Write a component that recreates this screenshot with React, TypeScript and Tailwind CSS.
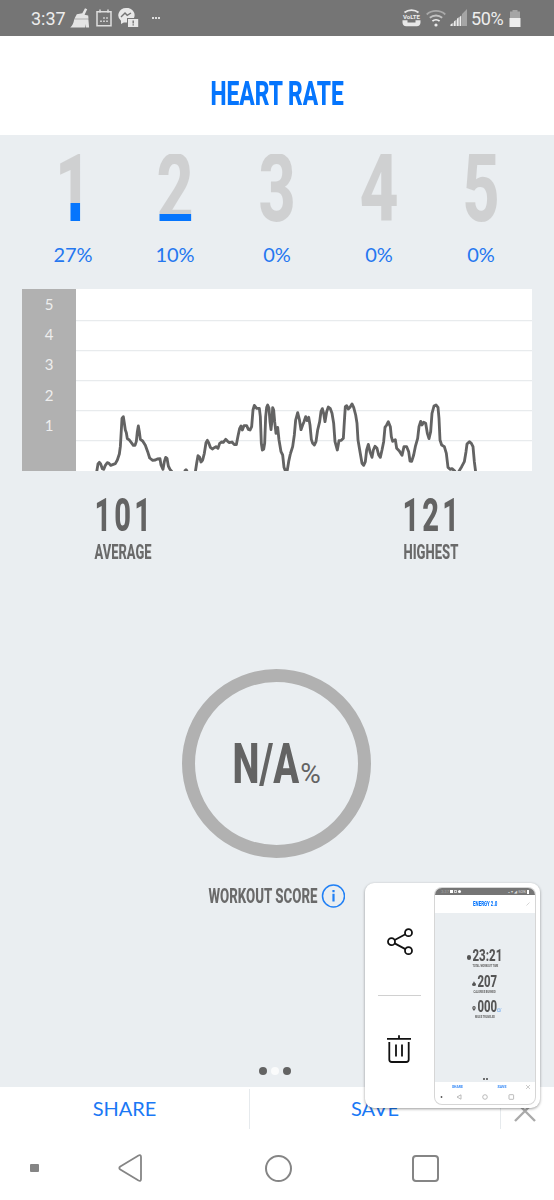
import { useLayoutEffect, useRef, useState } from "react";

const ZONES = [
  { zone: 1, percent: 27, width: 36 },
  { zone: 2, percent: 10, width: 37 },
  { zone: 3, percent: 0, width: 37 },
  { zone: 4, percent: 0, width: 39 },
  { zone: 5, percent: 0, width: 37 },
];

const TRACE_START = [
  "80,276 84,252 88,247 92,252 97,266 101,268 106,256 112,248 117,250 122,256 130,253 136,251 142,240 148,222 151,200 154,150 156,115 160,110 163,130 166,150 169,158 172,176 178,180 184,188 190,196 195,196 199,184 202,155 205,138 208,155 211,178 218,183 226,196 233,215 239,234 248,241 256,240 262,237 270,236 273,255 279,268 283,245 287,232 291,235 295,258 300,268 306,275",
  "343,274 348,269 352,274",
  "376,276 380,250 384,227 389,232 393,246 398,240 403,220 408,188 412,181 416,188 421,202 427,207 433,203 438,200 444,205 449,190 455,186 460,187 467,178 473,184 478,188 486,186 493,194 499,194 504,168 509,145 513,138 517,150 522,137 530,137 535,148 540,150 545,140 549,90 553,76 560,85 568,85 571,110 574,190 577,210 581,208 584,190 587,110 590,82 593,75 597,85 600,125 603,149 606,120 608,83 611,90 614,125 618,160 623,142 627,180 633,215 638,225 642,262 645,270 652,270 656,245 661,222",
];

const TRACE_END = [
  "61,222 68,200 73,165 77,120 83,98 88,118 93,149 98,135 102,125 107,110 111,122 116,112 120,135 124,178 128,190 133,195 138,185 143,150 149,125 153,95 157,86 161,100 165,125 170,95 175,81 181,86 186,100 191,130 195,185 202,210 207,182 214,181 220,175 224,110 226,80 230,77 235,87 240,82 246,72 251,82 257,105 261,130 264,180 270,215 276,250 281,256 286,245 290,210 295,193 300,215 306,232 310,210 315,199 321,205 326,225 331,232 336,210 341,185 345,142 350,135 355,125 361,140 364,170 368,184 376,179 380,205 388,213 396,226 402,200 410,200 416,215 420,243 425,244 431,225 436,200 443,175 447,140 452,124 456,135 461,127 467,130 472,160 477,176 482,155 486,100 492,78 498,75 504,82 507,115 510,180 515,195 523,200 529,220 534,262 541,268 546,266 556,275",
  "566,275 575,260 583,245 588,215 591,192 598,185 604,190 609,200 613,245 617,276",
];

// Squeezes a line of text to a given width, for the condensed headings.
function Condensed({
  text,
  width,
  className = "",
  fill,
}: {
  text: string;
  width: number;
  className?: string;
  fill?: number;
}) {
  const ref = useRef<HTMLSpanElement>(null);
  const [scale, setScale] = useState(1);

  useLayoutEffect(() => {
    if (ref.current) setScale(width / ref.current.offsetWidth);
  }, [text, width]);

  // the digit's baseline sits 3px above the bottom of its box
  const stop = fill ? `${3 + fill * 0.67}px` : "0px";

  return (
    <span className="flex shrink-0 justify-center" style={{ width }}>
      <span
        ref={ref}
        className={`block shrink-0 whitespace-nowrap font-[Roboto,sans-serif] font-extrabold ${className}`}
        style={{
          transform: `scaleX(${scale})`,
          ...(fill !== undefined && {
            backgroundImage: `linear-gradient(to top, #0575fd ${stop}, #cfd0d1 ${stop})`,
          }),
        }}
      >
        {text}
      </span>
    </span>
  );
}

function StatusBar() {
  return (
    <div className="flex h-9 items-center bg-[#757575] pl-[31px] pr-[32px] font-[Roboto,sans-serif] text-[18px] text-[#ededed]">
      <span className="w-[35px]">3:37</span>
      <svg className="ml-1 h-5 w-5" viewBox="0 0 20 20" fill="#e4e4e4">
        <path d="M15 .2 17.200 1.200 14.600 6.800 18.200 7.500 18.500 10.700H4.400L6.800 6.300 12.300 5.300z" />
        <path d="M4.200 11.200h14.200l.7 8.300h-3.300l-.8-3.500v3.500H.3c2-1.800 3.300-4.400 3.900-8.300z" />
      </svg>
      <svg className="ml-[6px] h-[18px] w-[16px]" viewBox="0 0 16 18" fill="none" stroke="#dedede" strokeWidth="1.500">
        <path d="M1 2.700h14v14H1zM4 .4v3.300M12 .4v3.300" />
        <path d="M7.200 9h1.600M10.200 9h1.600M4.200 12.300h1.600M7.200 12.300h1.600M10.200 12.300h1.600" strokeWidth="1.600" />
      </svg>
      <svg className="ml-[6px] h-5 w-[21px]" viewBox="0 0 21 20">
        <path d="M8 0a7.800 7.300 0 0 0-5 12.800V16l2.800-1.600H9V10h7A7.500 7.300 0 0 0 8 0z" fill="#e8e8e8" />
        <path d="m3 9 4-4 2.200 2.300L13 5" fill="none" stroke="#757575" strokeWidth="1.400" />
        <path d="M10 11h10.200v8H10z" fill="#e8e8e8" />
        <path d="M15.200 12.500v3M15.200 16.300v1.200" stroke="#757575" strokeWidth="1.400" />
      </svg>
      <span className="ml-[13px] flex gap-[1.500px]">
        <i className="size-[1.500px] bg-[#dedede]" />
        <i className="size-[1.500px] bg-[#dedede]" />
        <i className="size-[1.500px] bg-[#dedede]" />
      </span>
      <div className="ml-auto flex items-center">
        <svg className="h-[18px] w-[19px]" viewBox="0 0 19 18">
          <path d="M2.500 3.500C6.500.2 12.500.2 16.500 3.500" fill="none" stroke="#e8e8e8" strokeWidth="1.700" />
          <text x="9.500" y="9.600" textAnchor="middle" textLength="17" lengthAdjust="spacingAndGlyphs" fill="#ededed" className="font-[Roboto,sans-serif] text-[6px] font-bold">
            VoLTE
          </text>
          <path d="M.5 11.300h5v2.200h8v-2.200h5v2.200c0 2.300-1.500 3.700-3.700 3.700H4.200C2 17.200.5 15.800.5 13.500z" fill="#e8e8e8" />
        </svg>
        <svg className="ml-[5px] h-[18px] w-5" viewBox="0 0 20 18" fill="none" strokeWidth="1.800">
          <path d="M.7 5.500a14 14 0 0 1 18.600 0" stroke="#a9a9a9" />
          <path d="M3.800 8.800a9.500 9.500 0 0 1 12.400 0" stroke="#c2c2c2" />
          <path d="M6.400 12.200a5.400 5.400 0 0 1 7.200 0" stroke="#ededed" />
          <circle cx="10" cy="16" r="1.600" fill="#ededed" />
        </svg>
        <svg className="ml-[4px] h-[18px] w-[17px]" viewBox="0 0 17 18">
          <path d="M0 17 11 6.500V17zM12 5l5-5v17h-5z" fill="#a5a5a5" />
          <path d="M.5 17v-1.500L2.500 14v3zM4 17v-4.500l1.500-1.500v6zM7 17V9.800l1.500-1.500V17zM9.800 17V8l1.500-1.500V17z" fill="#ededed" />
        </svg>
        <span className="ml-[4px] w-[34px] tracking-[-0.4px]">50%</span>
        <svg className="ml-[4px] mr-[1px] h-[17px] w-[12px]" viewBox="0 0 12 17">
          <path d="M3.500 0h5v1.500H11V8H1V1.500h2.500z" fill="#a5a5a5" />
          <path d="M.5 8h11v9H.5z" fill="#ededed" />
        </svg>
      </div>
    </div>
  );
}

function HeartRateChart() {
  return (
    <div className="mx-[22px] flex h-[182px] bg-white">
      <div className="flex w-[54px] flex-col bg-[#b1b1b1] pt-[1px] text-center text-[15px] text-[#eeeeee]">
        {[5, 4, 3, 2, 1].map((n) => (
          <span key={n} className="h-[30.2px] leading-[29px]">
            {n}
          </span>
        ))}
      </div>
      <svg className="h-[182px] w-[456px]" viewBox="0 0 1368 546" fill="none">
        {[95, 185, 275, 365, 455].map((y) => (
          <path key={y} d={`M0 ${y}H1368`} stroke="#e8ebed" strokeWidth="4" />
        ))}
        <g transform="translate(-18 273)" stroke="#636363" strokeWidth="8.500" strokeLinejoin="round">
          {TRACE_START.map((points) => (
            <polyline key={points} points={points} />
          ))}
        </g>
        <g transform="translate(582 273)" stroke="#636363" strokeWidth="8.500" strokeLinejoin="round">
          {TRACE_END.map((points) => (
            <polyline key={points} points={points} />
          ))}
        </g>
      </svg>
    </div>
  );
}

function Stat({ value, label, labelWidth }: { value: string; label: string; labelWidth: number }) {
  return (
    <div className="flex w-[120px] flex-col items-center">
      <div className="pl-[3px]">
        <Condensed text={value} width={60} className="text-[46px] leading-[34px] tracking-[5px] text-[#636363]" />
      </div>
      <div className="mt-[12px]">
        <Condensed text={label} width={labelWidth} className="text-[19.5px] leading-[17px] text-[#6a6a6a]" />
      </div>
    </div>
  );
}

function PreviewStat({ value, label, width, labelWidth, icon }: { value: string; label: string; width: number; labelWidth: number; icon: React.ReactNode }) {
  return (
    <div className="flex h-[25.5px] flex-col items-center">
      <div className="flex items-center pr-px">
        <div className="flex w-[6px] items-end pt-[4px]">{icon}</div>
        <Condensed text={value} width={width} className="text-[16.5px] leading-[13px] text-[#555]" />
      </div>
      <div className="mt-[2px]">
        <Condensed text={label} width={labelWidth} className="text-[4px] leading-[4px] text-[#666]" />
      </div>
    </div>
  );
}

function Preview() {
  return (
    <div className="flex h-[216px] w-[100px] flex-col overflow-hidden rounded-[7px] bg-white shadow-[0_0_0_1px_#d6d6d6]">
      <div className="flex h-[7px] shrink-0 items-center justify-between bg-[#757575] px-[6px] text-[4px] leading-none text-[#ddd]">
        <span className="flex items-center gap-px">
          <span className="text-[#aaa]">3:37</span>
          <i className="size-[3px] bg-white" />
          <i className="size-[3px] border-[0.5px] border-[#ccc]" />
          <i className="size-[3px] rounded-full bg-white" />
        </span>
        <span className="flex items-center gap-px">
          ◒ ▾ ◢ 50%
          <i className="h-[4px] w-[2px] bg-white" />
        </span>
      </div>
      <div className="flex h-[18px] shrink-0 items-center justify-between pl-[38px] pr-[5px] text-[#0575fd]">
        <Condensed text="ENERGY 2.0" width={24} className="text-[7px] leading-[8px]" />
        <svg className="size-[4px]" viewBox="0 0 4 4" stroke="#bbb" strokeWidth=".6">
          <path d="M.5 3.500 3.500.5" />
        </svg>
      </div>
      <div className="flex h-[169px] shrink-0 flex-col bg-[#eaeef1] pt-[36px]">
        <div className="flex flex-col items-center">
          <PreviewStat value="23:21" label="TOTAL WORKOUT TIME" width={30} labelWidth={26} icon={<i className="size-[4.5px] rounded-full bg-[#555]" />} />
          <PreviewStat
            value="207"
            label="CALORIES BURNED"
            width={20}
            labelWidth={22}
            icon={
              <svg className="h-[5px] w-[4px]" viewBox="0 0 4 5" fill="#555">
                <path d="M2 0C2 1.500 4 2 4 3.500A2 1.500 0 0 1 0 3.500C0 2.500 1.500 2 2 0z" />
              </svg>
            }
          />
          <PreviewStat
            value="000"
            label="MILES TRAVELED"
            width={20}
            labelWidth={20}
            icon={
              <svg className="h-[5px] w-[4px]" viewBox="0 0 4 5">
                <path d="M2 5C.8 3.500.3 2.700.3 1.800a1.700 1.700 0 0 1 3.400 0C3.700 2.700 3.200 3.500 2 5z" fill="#555" />
                <circle cx="2" cy="1.900" r=".7" fill="#eee" />
              </svg>
            }
          />
        </div>
        <svg className="-mt-[18px] ml-[62px] h-[4px] w-[5px] shrink-0" viewBox="0 0 5 4" fill="none" stroke="#6ea9f0" strokeWidth=".6">
          <path d="M3 .8H.6v2.700h2.800V2M2 2.400 4.500.4" />
        </svg>
        <div className="mb-[2px] mt-auto flex justify-center gap-[1px]">
          <i className="size-[2px] rounded-full bg-[#444]" />
          <i className="size-[2px] rounded-full bg-[#444]" />
        </div>
      </div>
      <div className="flex h-[9px] shrink-0 items-center pl-[17px] text-[#3a8cf7]">
        <Condensed text="SHARE" width={11} className="text-[4px] leading-[5px]" />
        <span className="w-[34px]" />
        <Condensed text="SAVE" width={9} className="text-[4px] leading-[5px]" />
        <svg className="ml-[20px] size-[4px]" viewBox="0 0 4 4" stroke="#aaa" strokeWidth=".6">
          <path d="m0 0 4 4M4 0 0 4" />
        </svg>
      </div>
      <svg className="h-[13px] w-[100px] shrink-0" viewBox="0 0 100 13" fill="none" stroke="#aaa" strokeWidth=".8">
        <circle cx="6.500" cy="6" r=".9" fill="#555" stroke="none" />
        <path d="M26 3.800v4.400L22 6z" />
        <circle cx="50" cy="6" r="2.300" />
        <rect x="74" y="3.700" width="4.600" height="4.600" rx=".5" />
      </svg>
    </div>
  );
}

function ScreenshotCard() {
  return (
    <div className="absolute left-[365px] top-[883px] flex h-[225px] w-[175px] rounded-[9px] bg-white shadow-[0_1px_3px_rgba(0,0,0,0.4)]">
      <div className="flex w-[70px] shrink-0 flex-col items-center">
        <svg className="mt-[44px] h-[30px] w-[28px]" viewBox="0 0 28 30" fill="none" stroke="#111" strokeWidth="1.800">
          <circle cx="5.500" cy="14.700" r="3.500" />
          <circle cx="22.500" cy="5.700" r="3.500" />
          <circle cx="22.500" cy="23.700" r="3.500" />
          <path d="m8.700 13 10.700-5.700M8.700 16.400l10.700 5.700" />
        </svg>
        <div className="mr-[2px] mt-[38px] h-px w-[43px] bg-[#d0d0d0]" />
        <svg className="mr-[2px] mt-[38px] h-[30px] w-[26px]" viewBox="0 0 26 30" fill="none" stroke="#111" strokeWidth="1.800">
          <path d="M1 4.800h24M13 1.300v3.500M3.300 8v17.500c0 1.600.9 2.500 2.500 2.500h14.400c1.600 0 2.500-.9 2.500-2.500V8M10 10.500v12M16 10.500v12" />
        </svg>
      </div>
      <div className="pt-[5px]">
        <Preview />
      </div>
    </div>
  );
}

export default function App() {
  return (
    <div className="relative flex h-[1200px] w-[554px] flex-col overflow-hidden bg-white font-[Lato,sans-serif]">
      <StatusBar />
      <header className="flex h-[99px] items-center justify-center pt-[16px]">
        <Condensed text="HEART RATE" width={133} className="text-[32.5px] leading-[30px] text-[#0575fd]" />
      </header>

      <main className="flex h-[952px] flex-col bg-[#eaeef1] pt-[19px]">
        <div className="mx-[22px] flex h-[135px]">
          {ZONES.map(({ zone, percent, width }) => (
            <div key={zone} className="flex w-[102px] flex-col items-center">
              <Condensed
                text={String(zone)}
                width={width}
                fill={percent}
                className="bg-clip-text text-[94px] leading-[70px] text-transparent"
              />
              <span className="mt-[18px] text-[20px] leading-6 text-[#2577f0]">{percent}%</span>
            </div>
          ))}
        </div>

        <HeartRateChart />

        <div className="flex justify-between px-[63px] pt-[27px]">
          <Stat value="101" label="AVERAGE" labelWidth={57} />
          <Stat value="121" label="HIGHEST" labelWidth={55} />
        </div>

        <div className="ml-[182px] mt-[108px] flex size-[189px] items-center justify-center rounded-full border-[13px] border-[#b1b1b1]">
          <div className="flex items-end gap-[1px]">
            <Condensed text="N/A" width={67} className="text-[56px] leading-[42px] text-[#636363]" />
            <Condensed text="%" width={21} className="pb-[1px] text-[28px] leading-[20px] text-[#636363] !font-normal" />
          </div>
        </div>

        <div className="mt-[26px] flex h-6 items-center pl-[208px]">
          <div className="pt-[1px]">
            <Condensed text="WORKOUT SCORE" width={109} className="text-[19.5px] leading-[17px] text-[#6a6a6a]" />
          </div>
          <svg className="ml-[4px] size-6" viewBox="0 0 24 24" fill="none" stroke="#2180f5">
            <circle cx="12.500" cy="12" r="11" strokeWidth="1.500" />
            <path d="M12.500 9.800V17.500M12.500 6v2.200" strokeWidth="2.200" />
          </svg>
        </div>

        <div className="mb-[12px] mt-auto flex justify-center gap-[4px] pr-[4px]">
          <i className="size-2 rounded-full bg-[#636363]" />
          <i className="size-2 rounded-full bg-[#fafbfb]" />
          <i className="size-2 rounded-full bg-[#636363]" />
        </div>
      </main>

      <div className="flex h-[45px] items-start pt-[2px] text-[20px] text-[#1a78f5]">
        <button className="h-10 w-[250px] border-r border-[#e6eaed] pb-[2px]">SHARE</button>
        <button className="h-10 w-[251px] border-r border-[#e6eaed] pb-[2px]">SAVE</button>
        <button className="flex h-10 w-[48px] items-center justify-center pt-[4px]">
          <svg className="size-[22px]" viewBox="0 0 22 22" stroke="#aaa" strokeWidth="2.400">
            <path d="m1 1 20 20M21 1 1 21" />
          </svg>
        </button>
      </div>

      <nav className="flex h-[68px] items-center pt-[4px]">
        <i className="ml-[30px] size-[8.5px] rounded-[1px] bg-[#858585]" />
        <svg className="ml-[79px] h-7 w-[26px]" viewBox="0 0 26 28" fill="none" stroke="#858585" strokeWidth="1.800">
          <path d="M2.300 12.500 20.500 1.500Q23 .5 23 3v22q0 2.500-2.500 1.500L2.300 15.500Q.3 14 2.300 12.500z" />
        </svg>
        <i className="ml-[121px] size-[27px] rounded-full border-2 border-[#858585]" />
        <i className="ml-[120px] size-[27px] rounded-[4px] border-2 border-[#858585]" />
      </nav>

      <ScreenshotCard />
    </div>
  );
}
